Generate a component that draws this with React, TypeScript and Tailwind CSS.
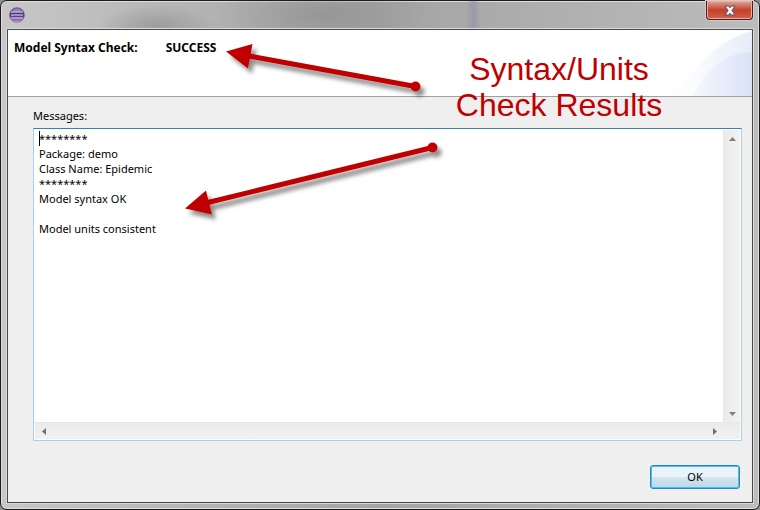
import { useState } from "react";

const REPORT = [
  "********",
  "Package: demo",
  "Class Name: Epidemic",
  "********",
  "Model syntax OK",
  "",
  "Model units consistent",
].join("\n");

function EclipseIcon() {
  return (
    <svg viewBox="0 0 16 16" className="size-4" aria-hidden="true">
      <defs>
        <linearGradient id="orb" x1="0" y1="0" x2="0" y2="1">
          <stop offset="0" stopColor="#7d63a6" />
          <stop offset="0.45" stopColor="#4a3378" />
          <stop offset="0.7" stopColor="#644b92" />
          <stop offset="1" stopColor="#c3a9dc" />
        </linearGradient>
      </defs>
      <circle cx="8" cy="8" r="7.5" fill="url(#orb)" stroke="#7c6896" strokeWidth="0.6" />
      <path d="M3 4.500C5 .8 11 .8 13 4.500Z" fill="#b7a4d0" opacity="0.6" />
      <path d="M2 5.500h12M2 8.500h12M2 11.500h12" transform="translate(0 -.5)" stroke="#ece6f6" strokeWidth="1" />
    </svg>
  );
}

function CloseButton() {
  return (
    <button
      type="button"
      aria-label="Close"
      className="mr-[6px] flex h-[19px] w-[47px] items-center justify-center self-start rounded-b-[4px] border border-t-0 border-[#4b1c1a] bg-linear-to-b from-[#e0a498] via-[#c23f2a] via-50% to-[#d3604a] shadow-[inset_0_0_0_1px_#eab0a5,0_0_0_1px_#d3c9c8]"
    >
      <svg viewBox="0 0 12 11" className="h-[11px] w-3" aria-hidden="true">
        <path
          d="M1 1h3.700L6 2.800 7.300 1H11L8 5.500 11 10H7.300L6 8.200 4.700 10H1L4 5.500Z"
          fill="#f7f7f7"
          stroke="#4d5264"
          strokeWidth="1"
          strokeLinejoin="round"
        />
      </svg>
    </button>
  );
}

function HeaderSwoosh() {
  return (
    <svg viewBox="0 0 90 66" className="h-[66px] w-[90px]" aria-hidden="true">
      <defs>
        <linearGradient id="outer" x1="0" x2="1">
          <stop offset="0" stopColor="#fff" />
          <stop offset="0.4" stopColor="#fafbfe" />
          <stop offset="1" stopColor="#e6ecf9" />
        </linearGradient>
        <linearGradient id="inner" x1="0" x2="1">
          <stop offset="0" stopColor="#f6f8fd" />
          <stop offset="1" stopColor="#d9e2f6" />
        </linearGradient>
      </defs>
      <path d="M0 66C35 48 45 12 90 1V66Z" fill="url(#outer)" />
      <path d="M30 66C46 40 58 24 90 22V66Z" fill="url(#inner)" />
    </svg>
  );
}

function Arrows() {
  return (
    <svg
      viewBox="0 0 760 510"
      className="pointer-events-none absolute top-0 left-0 h-[510px] w-[760px]"
      aria-hidden="true"
    >
      <defs>
        <filter id="shade" x="-10%" y="-30%" width="125%" height="180%">
          <feDropShadow dx="4" dy="5" stdDeviation="2" floodColor="#000" floodOpacity="0.45" />
        </filter>
      </defs>
      <g fill="#c00000" stroke="none" filter="url(#shade)">
        <path d="M226 51.500 252.500 44 248 68.500Z" />
        <path d="M249 56 415.500 86.500" stroke="#c00000" strokeWidth="5" />
        <circle cx="415.500" cy="86.500" r="5" />
      </g>
      <g fill="#c00000" stroke="none" filter="url(#shade)">
        <path d="M185 208.500 206 190.500 212 214.500Z" />
        <path d="M208 202.500 432.500 147.500" stroke="#c00000" strokeWidth="5" />
        <circle cx="432.500" cy="147.500" r="5" />
      </g>
    </svg>
  );
}

function MessageBox() {
  const [text, setText] = useState(REPORT);
  return (
    <div className="relative flex flex-1 flex-col border border-[#a9d0ee] border-t-[#3c7fb1] bg-white p-px">
      <div className="flex flex-1">
        <textarea
          id="messages"
          value={text}
          onChange={(e) => setText(e.target.value)}
          spellCheck={false}
          className="flex-1 resize-none overflow-hidden bg-white px-1 py-px text-[11px] leading-[15px] text-black outline-none"
        />
        <div className="flex w-[17px] flex-col justify-between border-l border-[#e6e6e6] bg-linear-to-r from-[#ebebeb] to-[#f2f2f2]">
          <button type="button" aria-label="Scroll up" className="flex h-[17px] items-center justify-center">
            <svg viewBox="0 0 7 4" className="h-1 w-[7px]"><path d="M0 4 3.500 0 7 4Z" fill="#808080" /></svg>
          </button>
          <button type="button" aria-label="Scroll down" className="flex h-[17px] items-center justify-center">
            <svg viewBox="0 0 7 4" className="h-1 w-[7px]"><path d="M0 0h7L3.500 4Z" fill="#808080" /></svg>
          </button>
        </div>
      </div>
      <div className="flex h-[17px] justify-between border-t border-[#e6e6e6] bg-linear-to-b from-[#ebebeb] to-[#f1f1f1] pr-[17px]">
        <button type="button" aria-label="Scroll left" className="flex w-[17px] items-center justify-center">
          <svg viewBox="0 0 4 7" className="h-[7px] w-1"><path d="M4 0v7L0 3.500Z" fill="#707070" /></svg>
        </button>
        <button type="button" aria-label="Scroll right" className="flex w-[17px] items-center justify-center">
          <svg viewBox="0 0 4 7" className="h-[7px] w-1"><path d="M0 0v7L4 3.500Z" fill="#707070" /></svg>
        </button>
      </div>
      <span className="pointer-events-none absolute top-[2px] left-[5px] h-[15px] w-px bg-black" />
    </div>
  );
}

export default function App() {
  return (
    <div className="relative flex min-h-screen flex-col bg-[#8c8c8c] font-['Noto_Sans','Open_Sans',sans-serif] text-[11px] text-black">
      <div className="flex flex-1 flex-col rounded-[7px] border border-[#1c1c1c] bg-linear-to-r from-[#c8c6c6] via-[#a4a4a4] via-50% to-[#bcbcbc] px-[6px] pb-[6px] shadow-[inset_0_0_0_1px_#dedede]">
        <div className="-mr-[6px] flex h-7 items-center justify-between bg-[radial-gradient(ellipse_60px_22px_at_20%_90%,#8686868c,transparent),radial-gradient(ellipse_110px_40px_at_42%_50%,#8a8a8a99,transparent),linear-gradient(to_right,transparent_61%,#8f8fa899_62%,transparent_63%)] pl-[2px]">
          <EclipseIcon />
          <CloseButton />
        </div>
        <div className="flex flex-1 flex-col border border-[#4a4a4a] bg-[#efefef] shadow-[0_0_0_1px_#d9d9d9]">
          <header className="flex h-[67px] justify-between border-b border-[#a0a0a0] bg-white">
            <h1 className="flex gap-7 pt-[9px] pl-[6px] text-[12px] leading-[18px] font-bold">
              <span>Model Syntax Check:</span>
              <span>SUCCESS</span>
            </h1>
            <HeaderSwoosh />
          </header>
          <main className="flex flex-1 flex-col pt-[10px] pr-[10px] pl-[25px]">
            <label htmlFor="messages" className="h-[21px] leading-[18px]">
              Messages:
            </label>
            <MessageBox />
          </main>
          <footer className="flex justify-end px-3 pt-6 pb-[13px]">
            <button
              type="button"
              className="h-6 w-[90px] rounded-[3px] border border-[#3c7fb1] bg-linear-to-b from-[#eaf4f8] from-50% via-[#d3e6ef] via-52% to-[#bcd8e6] text-[11px] leading-5 shadow-[inset_0_0_0_1px_#38c8f4]"
            >
              OK
            </button>
          </footer>
        </div>
      </div>
      <Arrows />
      <p className="pointer-events-none absolute top-[51px] left-[439px] w-60 text-center font-['Liberation_Sans',Arial,sans-serif] text-[32px] leading-9 text-[#c00000]">
        Syntax/Units
        <br />
        Check Results
      </p>
    </div>
  );
}
